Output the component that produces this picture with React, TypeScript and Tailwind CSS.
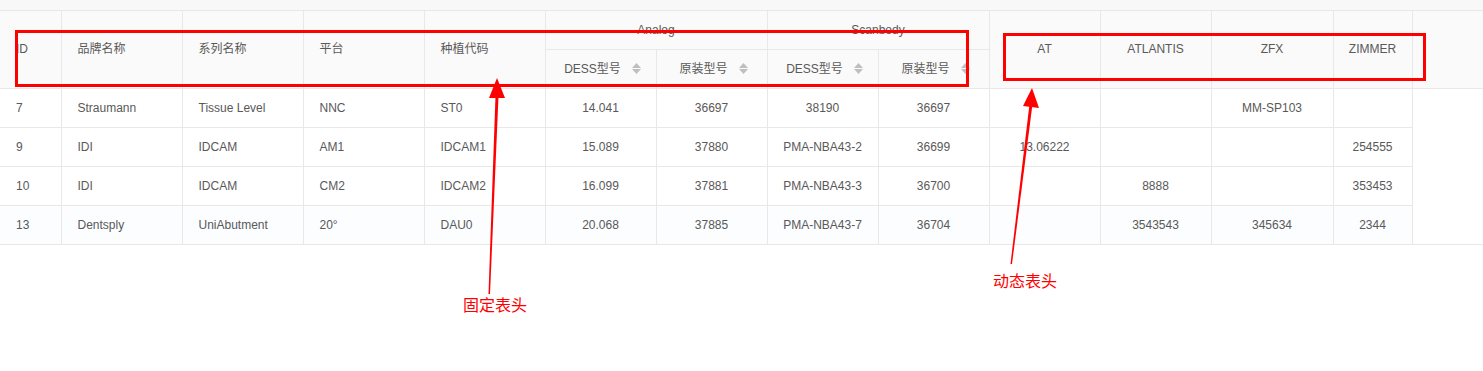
import React from 'react';

const font = { fontFamily: '"Liberation Sans", Arial, "Noto Sans CJK SC", sans-serif' };

type Row = string[];

const rows: Row[] = [
  ['7', 'Straumann', 'Tissue Level', 'NNC', 'ST0', '14.041', '36697', '38190', '36697', '', '', 'MM-SP103', ''],
  ['9', 'IDI', 'IDCAM', 'AM1', 'IDCAM1', '15.089', '37880', 'PMA-NBA43-2', '36699', '13.06222', '', '', '254555'],
  ['10', 'IDI', 'IDCAM', 'CM2', 'IDCAM2', '16.099', '37881', 'PMA-NBA43-3', '36700', '', '8888', '', '353453'],
  ['13', 'Dentsply', 'UniAbutment', '20°', 'DAU0', '20.068', '37885', 'PMA-NBA43-7', '36704', '', '3543543', '345634', '2344'],
];

const widths = [61, 121, 121, 121, 121, 111, 111, 111, 111, 111, 111, 122, 79, 71];

function SortIcon() {
  return (
    <span className="ml-[11px] inline-flex flex-col items-center gap-[1px] align-middle">
      <svg width="9" height="5" viewBox="0 0 9 5">
        <path d="M4.5 0 L9 5 L0 5 Z" fill="#bfbfbf" />
      </svg>
      <svg width="9" height="5" viewBox="0 0 9 5">
        <path d="M0 0 L9 0 L4.5 5 Z" fill="#bfbfbf" />
      </svg>
    </span>
  );
}

function Sorted({ label }: { label: string }) {
  return (
    <span className="inline-flex items-center pl-[4px]">
      {label}
      <SortIcon />
    </span>
  );
}

export default function App() {
  const th = 'border-r border-b border-[#e8e8e8] font-normal text-[#595959] bg-[#fafafa]';
  const thLeft = th + ' text-left pl-4';
  const thCenter = th + ' text-center';

  return (
    <div className="relative h-[371px] w-[1483px] overflow-hidden bg-white text-[12px]" style={font}>
      <div className="h-[11px] border-b border-[#e8e8e8] bg-[#f8f8f8]" />
      <table className="w-[1483px] table-fixed border-collapse">
        <colgroup>
          {widths.map((w, i) => (
            <col key={i} style={{ width: w }} />
          ))}
        </colgroup>
        <thead>
          <tr className="h-[38px]">
            <th rowSpan={2} className={thLeft}>ID</th>
            <th rowSpan={2} className={thLeft}>品牌名称</th>
            <th rowSpan={2} className={thLeft}>系列名称</th>
            <th rowSpan={2} className={thLeft}>平台</th>
            <th rowSpan={2} className={thLeft}>种植代码</th>
            <th colSpan={2} className={thCenter}>Analog</th>
            <th colSpan={2} className={thCenter}>Scanbody</th>
            <th rowSpan={2} className={thCenter}>AT</th>
            <th rowSpan={2} className={thCenter}>ATLANTIS</th>
            <th rowSpan={2} className={thCenter}>ZFX</th>
            <th rowSpan={2} className={thCenter}>ZIMMER</th>
            <th rowSpan={2} className="border-b border-[#e8e8e8] bg-[#fafafa]" />
          </tr>
          <tr className="h-[39px]">
            <th className={thCenter}><Sorted label="DESS型号" /></th>
            <th className={thCenter}><Sorted label="原装型号" /></th>
            <th className={thCenter}><Sorted label="DESS型号" /></th>
            <th className={thCenter}><Sorted label="原装型号" /></th>
          </tr>
        </thead>
        <tbody>
          {rows.map((r, ri) => {
            const last = ri === rows.length - 1;
            return (
              <tr key={ri} className={'h-[39px] ' + (last ? 'bg-[#fbfdff]' : 'bg-white')}>
                {r.map((c, ci) => (
                  <td
                    key={ci}
                    className={
                      'border-r border-b border-[#e8e8e8] text-[#595959] ' +
                      (ci < 5 ? 'pl-4 text-left' : 'text-center')
                    }
                  >
                    {c}
                  </td>
                ))}
                <td className={last ? 'border-b border-[#e8e8e8] bg-white' : 'bg-white'} />
              </tr>
            );
          })}
        </tbody>
      </table>

      {/* annotations */}
      <div className="pointer-events-none absolute left-[15px] top-[30px] h-[57px] w-[954px] border-[3px] border-[#ff0000]" />
      <div className="pointer-events-none absolute left-[1003px] top-[33px] h-[48px] w-[423px] border-[3px] border-[#ff0000]" />
      <svg className="pointer-events-none absolute left-0 top-0" width="1483" height="371">
        <polygon points="488.5,294 490,294 498.5,96 495.5,96" fill="#ff0000" />
        <polygon points="497,78 505,98 489,98" fill="#ff0000" />
        <polygon points="1010.5,264 1012,264 1032.5,104 1029.5,104" fill="#ff0000" />
        <polygon points="1032,88 1039,108 1023,106" fill="#ff0000" />
      </svg>
      <div className="absolute left-[463px] top-[296px] text-[16px] leading-[20px] text-[#ff0000]" style={font}>
        固定表头
      </div>
      <div className="absolute left-[993px] top-[272px] text-[16px] leading-[20px] text-[#ff0000]" style={font}>
        动态表头
      </div>
    </div>
  );
}
